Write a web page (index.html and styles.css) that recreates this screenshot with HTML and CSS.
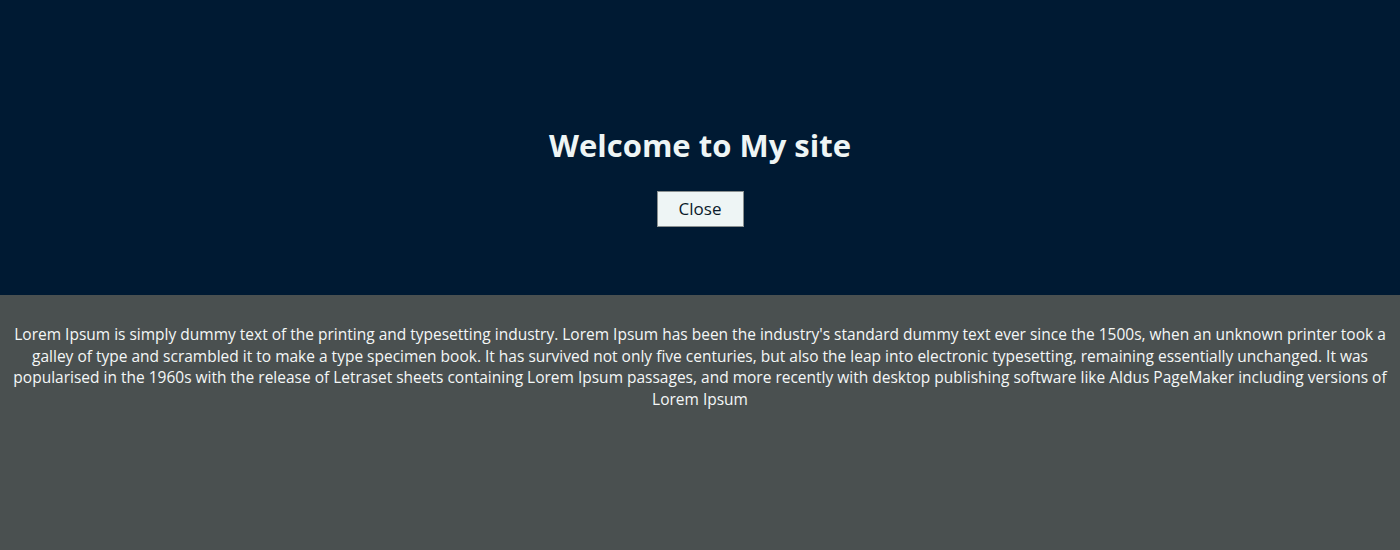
FILE: index.html
```html
<!DOCTYPE html>
<html lang="en">
<head>
<meta charset="utf-8">
<title>Welcome</title>
<link rel="stylesheet" href="styles.css">
</head>
<body>
<header class="hero">
  <h1 class="hero-title">Welcome to My site</h1>
  <button class="close-btn" type="button">Close</button>
</header>
<main class="content">
  <p class="lorem">Lorem Ipsum is simply dummy text of the printing and typesetting industry. Lorem Ipsum has been the industry's standard dummy text ever since the 1500s, when an unknown printer took a galley of type and scrambled it to make a type specimen book. It has survived not only five centuries, but also the leap into electronic typesetting, remaining essentially unchanged. It was popularised in the 1960s with the release of Letraset sheets containing Lorem Ipsum passages, and more recently with desktop publishing software like Aldus PageMaker including versions of Lorem Ipsum</p>
</main>
</body>
</html>
```
FILE: styles.css
```css
html, body {
  margin: 0;
  padding: 0;
  height: 100%;
}
body {
  font-family: "Open Sans", "Noto Sans", sans-serif;
  background: #4a5050;
  color: #f4f7f7;
  display: flex;
  flex-direction: column;
}
.hero {
  background: #001a33;
  height: 295px;
  box-sizing: border-box;
  padding-top: 59px;
  display: flex;
  flex-direction: column;
  align-items: center;
  justify-content: center;
}
.hero-title {
  margin: 0 0 26px;
  font-size: 31px;
  font-weight: 700;
  color: #eef5f5;
  line-height: 1.2;
}
.close-btn {
  font-family: inherit;
  font-size: 17px;
  width: 87px;
  height: 36px;
  background: #eef5f5;
  color: #0a1a2a;
  border: 1px solid #8a9090;
  padding: 0;
  cursor: pointer;
}
.content {
  flex: 1;
  padding: 0 12px;
}
.lorem {
  margin: 29px 0 0;
  text-align: center;
  font-size: 15.5px;
  line-height: 21.5px;
}
```
